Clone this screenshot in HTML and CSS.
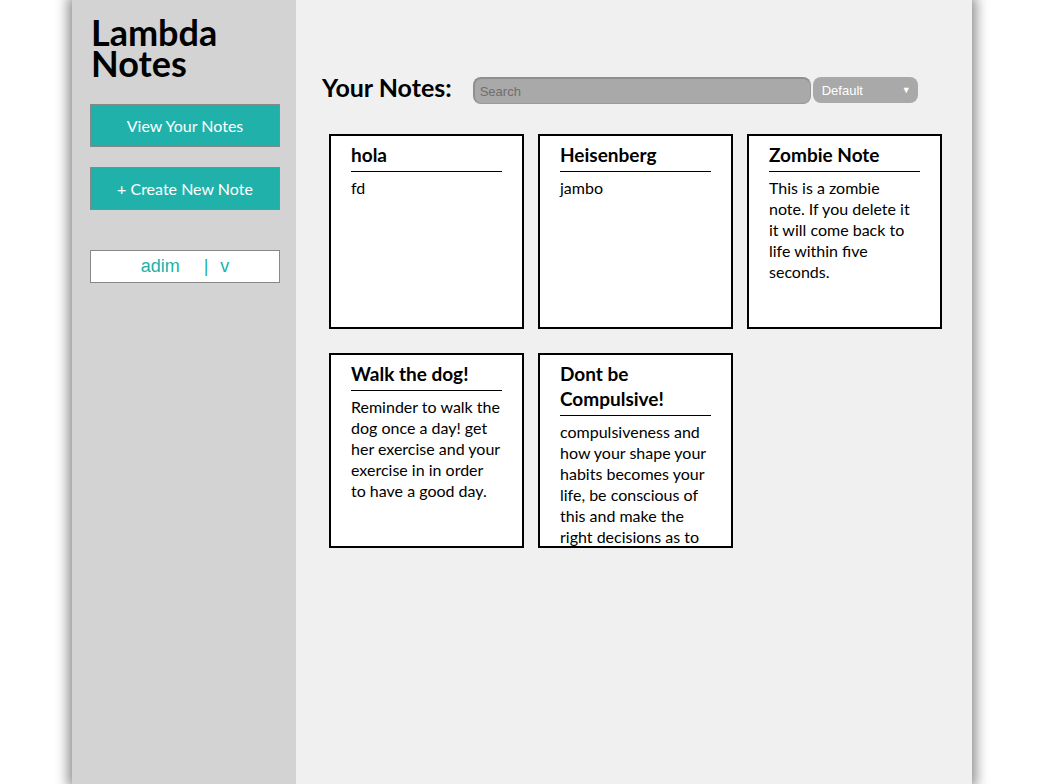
FILE: index.html
```html
<!DOCTYPE html>
<html>
<head>
<meta charset="utf-8">
<title>Lambda Notes</title>
<link rel="stylesheet" href="styles.css">
</head>
<body>
<div class="app">
  <aside class="sidebar">
    <h1 class="brand">Lambda Notes</h1>
    <button class="nav-btn">View Your Notes</button>
    <button class="nav-btn nav-btn-second">+ Create New Note</button>
    <div class="user-box"><span class="user-name">adim</span><span class="user-sep">|</span><span class="user-v">v</span></div>
  </aside>
  <main class="main">
    <div class="toolbar">
      <h2 class="heading">Your Notes:</h2>
      <input class="search" type="text" placeholder="Search">
      <div class="select-wrap">
        <select class="sort"><option>Default</option></select>
        <span class="select-arrow">▼</span>
      </div>
    </div>
    <div class="notes">
      <div class="card">
        <h3 class="card-title">hola</h3>
        <p class="card-text">fd</p>
      </div>
      <div class="card">
        <h3 class="card-title">Heisenberg</h3>
        <p class="card-text">jambo</p>
      </div>
      <div class="card">
        <h3 class="card-title">Zombie Note</h3>
        <p class="card-text">This is a zombie note. If you delete it it will come back to life within five seconds.</p>
      </div>
      <div class="card">
        <h3 class="card-title">Walk the dog!</h3>
        <p class="card-text">Reminder to walk the dog once a day! get her exercise and your exercise in in order to have a good day.</p>
      </div>
      <div class="card">
        <h3 class="card-title">Dont be Compulsive!</h3>
        <p class="card-text">compulsiveness and how your shape your habits becomes your life, be conscious of this and make the right decisions as to what you do every day.</p>
      </div>
    </div>
  </main>
</div>
</body>
</html>
```
FILE: styles.css
```css
html, body {
  margin: 0;
  padding: 0;
  background: #ffffff;
  height: 100%;
}
body {
  font-family: "Lato", "Open Sans", sans-serif;
  overflow: hidden;
}
.app {
  width: 900px;
  margin-left: calc(50% - 450.5px);
  min-height: 784px;
  display: flex;
  box-shadow: 0 0 12px 4px rgba(0, 0, 0, 0.45);
}
.sidebar {
  width: 224px;
  flex: none;
  background: #d3d3d3;
  box-sizing: border-box;
  padding: 17px 16px 0 18px;
  display: flex;
  flex-direction: column;
}
.brand {
  margin: 0 0 0 1px;
  font-size: 36px;
  line-height: 31px;
  font-weight: 700;
  color: #000;
}
.nav-btn {
  margin-top: 25px;
  width: 190px;
  height: 43px;
  background: #20b2aa;
  border: 1px solid #888;
  color: #fff;
  font-family: "Lato", "Open Sans", sans-serif;
  font-size: 16px;
  padding: 0;
  cursor: pointer;
}
.nav-btn-second {
  margin-top: 20px;
}
.user-box {
  margin-top: 40px;
  width: 190px;
  height: 33px;
  box-sizing: border-box;
  background: #fff;
  border: 1px solid #888;
  display: flex;
  align-items: center;
  justify-content: center;
  font-family: "Liberation Sans", Arial, sans-serif;
  font-size: 18px;
  color: #20b2aa;
}
.user-sep {
  margin: 0 12px 0 24px;
}
.main {
  flex: 1;
  background: #f0f0f0;
  padding: 76px 0 0 26px;
}
.toolbar {
  display: flex;
  align-items: center;
  height: 28px;
}
.heading {
  margin: 0 21px 6px 0;
  font-size: 25px;
  font-weight: 700;
  color: #000;
}
.search {
  width: 338px;
  height: 27px;
  box-sizing: border-box;
  background: #a9a9a9;
  border: 1px solid #999;
  border-top: 2px solid #8f8f8f;
  border-left: 2px solid #8f8f8f;
  border-radius: 8px;
  padding: 2px 5px 0;
  font-family: "Liberation Sans", Arial, sans-serif;
  font-size: 13px;
  color: #333;
  outline: none;
}
.search::placeholder {
  color: #6e6e6e;
}
.select-wrap {
  position: relative;
  margin-left: 2px;
  height: 26px;
}
.sort {
  appearance: none;
  -webkit-appearance: none;
  width: 105px;
  height: 26px;
  background: #a9a9a9;
  border: none;
  border-radius: 8px;
  color: #fff;
  font-family: "Liberation Sans", Arial, sans-serif;
  font-size: 13px;
  padding: 0 0 0 9px;
  outline: none;
}
.select-arrow {
  position: absolute;
  right: 7px;
  top: 8px;
  font-size: 9px;
  line-height: 9px;
  color: #fff;
  pointer-events: none;
}
.notes {
  display: grid;
  grid-template-columns: repeat(3, 195px);
  column-gap: 14px;
  row-gap: 24px;
  margin: 30px 0 0 7px;
}
.card {
  width: 195px;
  height: 195px;
  box-sizing: border-box;
  background: #fff;
  border: 2px solid #000;
  padding: 6px 20px 0;
  overflow: hidden;
}
.card-title {
  margin: 0;
  font-size: 19px;
  line-height: 25px;
  font-weight: 700;
  color: #000;
  padding-bottom: 4px;
  border-bottom: 1px solid #000;
}
.card-text {
  margin: 5px 1px 0 0;
  font-size: 16px;
  line-height: 21px;
  color: #000;
}
```
